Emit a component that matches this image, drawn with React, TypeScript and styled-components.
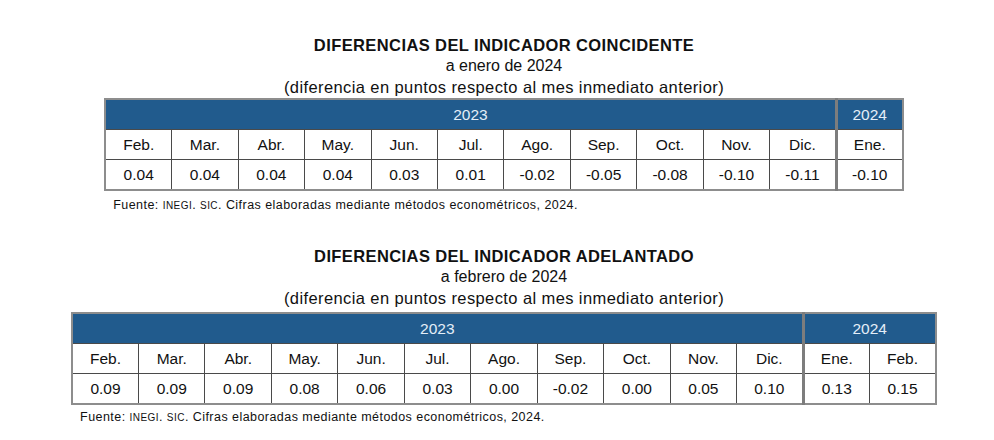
import React from "react";
import styled, { createGlobalStyle } from "styled-components";

const Global = createGlobalStyle`
  html, body { margin: 0; padding: 0; background: #ffffff; }
  body { font-family: "Liberation Sans", Arial, sans-serif; color: #111; }
`;

const Page = styled.div`
  width: 994px;
  height: 440px;
  box-sizing: border-box;
  padding: 35px 0 0 14px;
  display: flex;
  flex-direction: column;
  align-items: center;
`;

const Block = styled.section<{ $gap: number }>`
  display: flex;
  flex-direction: column;
  align-items: center;
  margin-bottom: ${(p) => p.$gap}px;
`;

const Title = styled.h2`
  margin: 0;
  font-size: 16.5px;
  font-weight: bold;
  line-height: 20px;
  letter-spacing: 0.4px;
`;

const Subtitle = styled.div`
  font-size: 16px;
  line-height: 22px;
`;

const Note = styled.div<{ $after: number }>`
  font-size: 16.5px;
  line-height: 21px;
  letter-spacing: 0.4px;
  margin-bottom: ${(p) => p.$after}px;
`;

const Table = styled.table<{ $cols: number }>`
  border-collapse: collapse;
  table-layout: fixed;
  width: ${(p) => p.$cols * 66.3 + 4}px;
  border: 2px solid #8d8d8d;
  font-size: 15.5px;
`;

const YearCell = styled.th<{ $sep?: boolean }>`
  background: #215b8d;
  color: #e4eef8;
  font-weight: normal;
  height: 29px;
  padding: 0;
  text-align: center;
  border-left: ${(p) => (p.$sep ? "3px solid #7d7d7d" : "none")};
`;

const MonthCell = styled.td<{ $sep?: boolean }>`
  height: 29px;
  padding: 0;
  text-align: center;
  border: 1px solid #4a4a4a;
  border-left: ${(p) => (p.$sep ? "3px solid #7d7d7d" : "1px solid #4a4a4a")};
`;

const ValueCell = styled(MonthCell)``;

const Source = styled.div<{ $indent: number; $top: number }>`
  align-self: stretch;
  padding-left: ${(p) => p.$indent}px;
  margin-top: ${(p) => p.$top}px;
  font-size: 12.5px;
  line-height: 14px;
  letter-spacing: 0.45px;
  color: #111;
`;

const Small = styled.span`
  font-size: 10px;
`;

type Data = {
  title: string;
  sub: string;
  months2023: string[];
  months2024: string[];
  values: string[];
  gap: number;
  noteAfter: number;
  sourceTop: number;
};

const months2023 = ["Feb.", "Mar.", "Abr.", "May.", "Jun.", "Jul.", "Ago.", "Sep.", "Oct.", "Nov.", "Dic."];

const tables: Data[] = [
  {
    title: "DIFERENCIAS DEL INDICADOR COINCIDENTE",
    sub: "a enero de 2024",
    months2023,
    months2024: ["Ene."],
    values: ["0.04", "0.04", "0.04", "0.04", "0.03", "0.01", "-0.02", "-0.05", "-0.08", "-0.10", "-0.11", "-0.10"],
    gap: 33,
    noteAfter: 0,
    sourceTop: 7,
  },
  {
    title: "DIFERENCIAS DEL INDICADOR ADELANTADO",
    sub: "a febrero de 2024",
    months2023,
    months2024: ["Ene.", "Feb."],
    values: ["0.09", "0.09", "0.09", "0.08", "0.06", "0.03", "0.00", "-0.02", "0.00", "0.05", "0.10", "0.13", "0.15"],
    gap: 0,
    noteAfter: 3,
    sourceTop: 5,
  },
];

function IndicatorTable({ d }: { d: Data }) {
  const n = d.months2023.length;
  const all = [...d.months2023, ...d.months2024];
  return (
    <Block $gap={d.gap}>
      <Title>{d.title}</Title>
      <Subtitle>{d.sub}</Subtitle>
      <Note $after={d.noteAfter}>(diferencia en puntos respecto al mes inmediato anterior)</Note>
      <Table $cols={all.length}>
        <thead>
          <tr>
            <YearCell colSpan={n}>2023</YearCell>
            <YearCell colSpan={d.months2024.length} $sep>
              2024
            </YearCell>
          </tr>
        </thead>
        <tbody>
          <tr>
            {all.map((m, i) => (
              <MonthCell key={i} $sep={i === n}>
                {m}
              </MonthCell>
            ))}
          </tr>
          <tr>
            {d.values.map((v, i) => (
              <ValueCell key={i} $sep={i === n}>
                {v}
              </ValueCell>
            ))}
          </tr>
        </tbody>
      </Table>
      <Source $indent={9} $top={d.sourceTop}>
        Fuente: <Small>INEGI</Small>. <Small>SIC</Small>. Cifras elaboradas mediante métodos econométricos, 2024.
      </Source>
    </Block>
  );
}

export default function App() {
  return (
    <>
      <Global />
      <Page>
        {tables.map((d, i) => (
          <IndicatorTable key={i} d={d} />
        ))}
      </Page>
    </>
  );
}
